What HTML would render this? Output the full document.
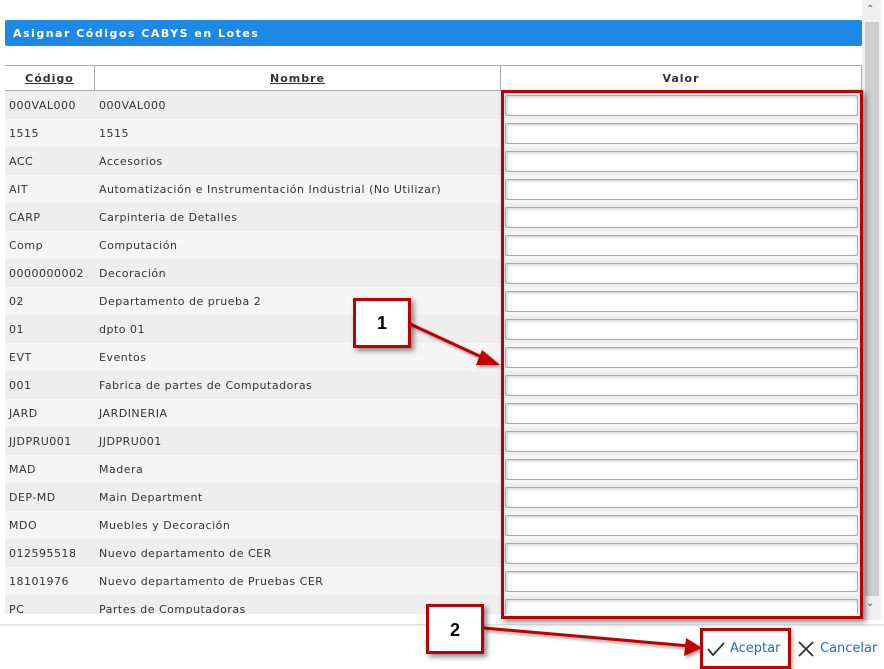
<!DOCTYPE html>
<html><head><meta charset="utf-8"><style>
*{margin:0;padding:0;box-sizing:border-box}
body{width:884px;height:669px;background:#fff;font-family:"DejaVu Sans","Liberation Sans",sans-serif;font-size:11px;color:#333;position:relative;overflow:hidden}
.abs{position:absolute}
.hdr{left:5px;top:20px;width:857px;height:26px;background:#1e88e5;border-radius:2px;color:#fff;font-weight:bold;font-size:11px;letter-spacing:1.5px;padding:7px 0 0 8px}
.th{top:65px;height:26px;border-top:1px solid #aaa;border-bottom:1px solid #aaa;font-weight:bold;text-align:center;padding-top:6px;letter-spacing:1px}
.row{left:5px;width:857px;height:28px;letter-spacing:0.5px}
.row span{position:absolute;top:8px}
.inp{position:absolute;left:500px;top:4px;width:353px;height:21px;background:#fff;border:1px solid #aaa;border-radius:2px;box-shadow:inset 1px 1px 3px #ccc}
.redbox{border:3px solid #c00000;box-shadow:3px 3px 5px rgba(0,0,0,.45)}
.lbl{background:#fff;font-family:"Liberation Sans",sans-serif;font-weight:bold;font-size:18px;color:#000;text-align:center}
</style></head><body>
<div class="abs hdr">Asignar Códigos CABYS en Lotes</div>
<div class="abs" style="left:862px;top:0;width:19px;height:620px;background:#f0f0f0"></div>
<div class="abs" style="left:865px;top:22px;width:14px;height:574px;background:#cdcdcd"></div>
<div class="abs" style="left:866px;top:4px;font-size:10px;color:#555">⌃</div>
<div class="abs" style="left:866px;top:598px;font-size:10px;color:#555">⌄</div>
<div class="abs th" style="left:5px;width:90px;border-right:1px solid #aaa"><u>Código</u></div>
<div class="abs th" style="left:95px;width:406px;border-right:1px solid #aaa"><u>Nombre</u></div>
<div class="abs th" style="left:501px;width:361px;border-right:1px solid #aaa">Valor</div>
<div class="abs" style="left:0;top:91px;width:862px;height:523px;overflow:hidden">
<div id="rows"></div>
</div>
<div class="abs" style="left:0;top:624px;width:884px;height:3px;background:linear-gradient(#ddd,#fff)"></div>
<div class="abs redbox" style="left:501px;top:90px;width:362px;height:529px"></div>
<svg class="abs" style="left:0;top:0" width="884" height="669">
<defs><filter id="s"><feDropShadow dx="2" dy="2" stdDeviation="1.5" flood-opacity=".4"/></filter></defs>
<g filter="url(#s)" fill="#c00000" stroke="#c00000">
<line x1="410" y1="324" x2="488" y2="360" stroke-width="3"/>
<polygon points="500,365 482,350 476,365" stroke="none"/>
<line x1="484" y1="628" x2="690" y2="646" stroke-width="3"/>
<polygon points="702,648 686,638 684,656" stroke="none"/>
</g>
</svg>
<div class="abs redbox lbl" style="left:353px;top:298px;width:58px;height:50px;padding-top:12px">1</div>
<div class="abs redbox lbl" style="left:426px;top:604px;width:58px;height:50px;padding-top:13px">2</div>
<div class="abs redbox" style="left:700px;top:628px;width:91px;height:41px;box-shadow:2px 2px 4px rgba(0,0,0,.3)"></div>
<svg class="abs" style="left:706px;top:640px" width="20" height="18"><path d="M2 9 L7 15 L18 3" fill="none" stroke="#333" stroke-width="1.8"/></svg>
<div class="abs" style="left:730px;top:641px;font-size:13px;color:#1e6fb8">Aceptar</div>
<svg class="abs" style="left:797px;top:640px" width="18" height="18"><path d="M2 2 L16 16 M16 2 L2 16" fill="none" stroke="#333" stroke-width="1.8"/></svg>
<div class="abs" style="left:820px;top:641px;font-size:13px;color:#1e6fb8">Cancelar</div>
<script>
var d=[["000VAL000","000VAL000"],["1515","1515"],["ACC","Accesorios"],["AIT","Automatización e Instrumentación Industrial (No Utilizar)"],["CARP","Carpinteria de Detalles"],["Comp","Computación"],["0000000002","Decoración"],["02","Departamento de prueba 2"],["01","dpto 01"],["EVT","Eventos"],["001","Fabrica de partes de Computadoras"],["JARD","JARDINERIA"],["JJDPRU001","JJDPRU001"],["MAD","Madera"],["DEP-MD","Main Department"],["MDO","Muebles y Decoración"],["012595518","Nuevo departamento de CER"],["18101976","Nuevo departamento de Pruebas CER"],["PC","Partes de Computadoras"]];
var h="";d.forEach(function(r,i){h+='<div class="abs row" style="top:'+(i*28)+'px;background:'+(i%2?'#f5f5f5':'#eeeeee')+'"><span style="left:4px">'+r[0]+'</span><span style="left:94px">'+r[1]+'</span><div class="inp"></div></div>';});
document.getElementById("rows").innerHTML=h;
</script>
</body></html>
